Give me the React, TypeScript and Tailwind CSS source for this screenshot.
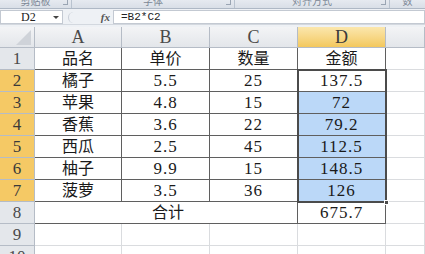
import type { ReactNode } from 'react';

const COLS = ['A', 'B', 'C', 'D'];

const ROWS: string[][] = [
    ['品名', '单价', '数量', '金额'],
    ['橘子', '5.5', '25', '137.5'],
    ['苹果', '4.8', '15', '72'],
    ['香蕉', '3.6', '22', '79.2'],
    ['西瓜', '2.5', '45', '112.5'],
    ['柚子', '9.9', '15', '148.5'],
    ['菠萝', '3.5', '36', '126'],
];

const FONT = "font-['Liberation_Serif','Noto_Sans_CJK_SC',serif]";

function RibbonGroup({ label, width, last }: { label: string; width?: string; last?: boolean }) {
    return (
        <div className={`relative flex h-full justify-center overflow-hidden ${width ?? 'flex-1'} ${last ? '' : 'border-r border-[#b9c3cf]'}`}>
            <span className="-mt-[5px] text-[10px] leading-[14px] text-[#7c8795]">{label}</span>
            {!last && <span className="absolute right-[3px] top-0 h-[5px] w-[5px] border-b border-r border-[#9aa5b3]" />}
        </div>
    );
}

function HeaderCell({ children, active }: { children?: ReactNode; active?: boolean }) {
    return (
        <div
            className={`flex items-center justify-center border-b border-r border-[#b5bcc6] text-[18px] leading-none ${
                active ? 'bg-gradient-to-b from-[#fbe7ad] to-[#f3c85c] text-[#3a3a3a]' : 'bg-gradient-to-b from-[#f3f4f6] to-[#e3e6ea] text-[#4a4a4a]'
            }`}>
            {children}
        </div>
    );
}

function RowHead({ n, active }: { n: number; active?: boolean }) {
    return (
        <div
            className={`flex items-center justify-center border-b border-r border-[#b5bcc6] text-[17px] leading-none ${
                active ? 'bg-[#f5c965] text-[#3a3a3a]' : 'bg-[#e4e7eb] text-[#4a4a4a]'
            }`}>
            {n}
        </div>
    );
}

export default function App() {
    return (
        <div className={`h-[254px] w-[425px] overflow-hidden bg-white ${FONT}`}>
            {/* ribbon group labels, cut off at the top */}
            <div className="flex h-[9px] border-b border-[#aeb8c5] bg-gradient-to-b from-[#e6eaf0] to-[#d9dfe7]">
                <RibbonGroup label="剪贴板" width="w-[72px]" />
                <RibbonGroup label="字体" width="w-[163px]" />
                <RibbonGroup label="对齐方式" width="w-[155px]" />
                <RibbonGroup label="数" last />
            </div>

            {/* formula bar */}
            <div className="flex h-[15px] items-stretch bg-[#eef1f5] pt-[1px]">
                <div className="flex w-[63px] items-center border border-[#c3c9d2] bg-white pl-[20px] text-[12px] text-[#222]">
                    <span className="flex-1">D2</span>
                    <span className="mr-[3px] h-0 w-0 border-x-[3px] border-t-[3px] border-x-transparent border-t-[#444]" />
                </div>
                <div className="flex w-[50px] items-center">
                    <span className="ml-[5px] h-[11px] w-[12px] rounded-l-full border-l border-[#c9cfd8]" />
                    <span className="ml-auto mr-[3px] text-[11px] font-bold italic text-[#555]">fx</span>
                </div>
                <div className="flex flex-1 items-center border border-[#c3c9d2] bg-white pl-[7px] font-['Liberation_Mono',monospace] text-[11px] text-[#222]">
                    =B2*C2
                </div>
            </div>
            <div className="h-[3px] border-t border-[#d3d8df] bg-[#eef1f5]" />

            {/* sheet */}
            <div className="relative grid grid-cols-[35px_87px_88px_88px_88px_1fr] grid-rows-[21px_repeat(10,22px)]">
                <div className="relative border-b border-r border-[#b5bcc6] bg-gradient-to-b from-[#f3f4f6] to-[#e3e6ea]">
                    <span className="absolute bottom-[2px] right-[3px] h-0 w-0 border-b-[15px] border-l-[15px] border-b-[#cfd3d9] border-l-transparent" />
                </div>
                {COLS.map((c) => (
                    <HeaderCell key={c} active={c === 'D'}>
                        {c}
                    </HeaderCell>
                ))}
                <HeaderCell />

                {ROWS.map((row, i) => (
                    <Row key={i} n={i + 1} row={row} />
                ))}

                {/* row 8: total */}
                <RowHead n={8} />
                <div className="col-span-3 flex items-center justify-center border-b border-r border-[#5f5f5f] pl-[4px] text-[16px] text-[#1a1a1a]">
                    合计
                </div>
                <div className="flex items-center justify-center border-b border-r border-[#5f5f5f] text-[17px] tracking-[1px] text-[#1a1a1a]">
                    675.7
                </div>
                <div className="border-b border-r border-[#dadcdf]" />

                {[9, 10].map((n) => (
                    <EmptyRow key={n} n={n} />
                ))}

                {/* selection D2:D7 */}
                <div className="pointer-events-none absolute left-[297px] top-[42px] h-[134px] w-[90px] border-2 border-[#4b4b4b]">
                    <span className="absolute -bottom-[4px] -right-[4px] h-[5px] w-[5px] border border-white bg-[#4b4b4b]" />
                </div>
            </div>
        </div>
    );
}

function Row({ n, row }: { n: number; row: string[] }) {
    const selected = n >= 2;
    return (
        <>
            <RowHead n={n} active={selected} />
            {row.map((v, j) => {
                const blue = j === 3 && n >= 3;
                const num = j > 0 && n > 1;
                return (
                    <div
                        key={j}
                        className={`flex items-center justify-center border-b border-r border-[#5f5f5f] text-[#1a1a1a] ${
                            num ? 'text-[17px] tracking-[1px]' : 'text-[16px]'
                        } ${blue ? 'bg-[#bbd8f8]' : 'bg-white'}`}>
                        {v}
                    </div>
                );
            })}
            <div className="border-b border-r border-[#dadcdf]" />
        </>
    );
}

function EmptyRow({ n }: { n: number }) {
    return (
        <>
            <RowHead n={n} />
            {[0, 1, 2, 3, 4].map((j) => (
                <div key={j} className="border-b border-r border-[#dadcdf]" />
            ))}
        </>
    );
}
